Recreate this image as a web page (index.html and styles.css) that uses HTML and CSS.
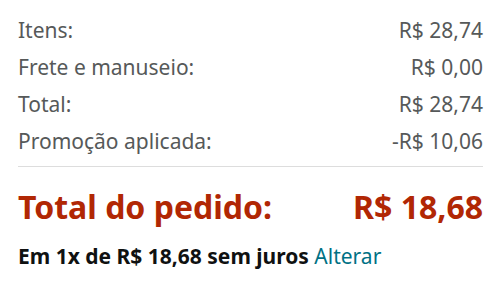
FILE: index.html
```html
<!DOCTYPE html>
<html lang="pt-BR">
<head>
    <meta charset="UTF-8">
    <title>Resumo do pedido</title>
    <link rel="stylesheet" href="styles.css">
</head>
<body>

    <!-- Order summary -->
    <div class="summary">
        <div class="row"><span>Itens:</span><span>R$ 28,74</span></div>
        <div class="row"><span>Frete e manuseio:</span><span>R$ 0,00</span></div>
        <div class="row"><span>Total:</span><span>R$ 28,74</span></div>
        <div class="row"><span>Promoção aplicada:</span><span>-R$ 10,06</span></div>

        <hr class="divider">

        <div class="row order-total"><span>Total do pedido:</span><span>R$ 18,68</span></div>
        <p class="installments">Em 1x de R$ 18,68 sem juros <a href="#">Alterar</a></p>
    </div>

</body>
</html>
```

FILE: styles.css
```css
/* General Styles */
* {
    margin: 0;
    padding: 0;
    box-sizing: border-box;
}

body {
    background-color: #fff;
    font-family: "Noto Sans", "Open Sans", Arial, sans-serif;
}

/* Summary box */
.summary {
    padding: 12px 17px 0 18px;
}

.row {
    display: flex;
    justify-content: space-between;
    align-items: baseline;
    color: #565959;
    font-size: 21px;
    line-height: 37px;
}

.divider {
    border: none;
    border-top: 1px solid #dddddd;
    margin: 6px 0 18px;
}

.order-total {
    color: #b12704;
    font-weight: bold;
    font-size: 32px;
    line-height: 44px;
}

.installments {
    margin-top: 13px;
    color: #0f1111;
    font-weight: bold;
    font-size: 21px;
}

.installments a {
    color: #007185;
    font-weight: normal;
    text-decoration: none;
}
```
